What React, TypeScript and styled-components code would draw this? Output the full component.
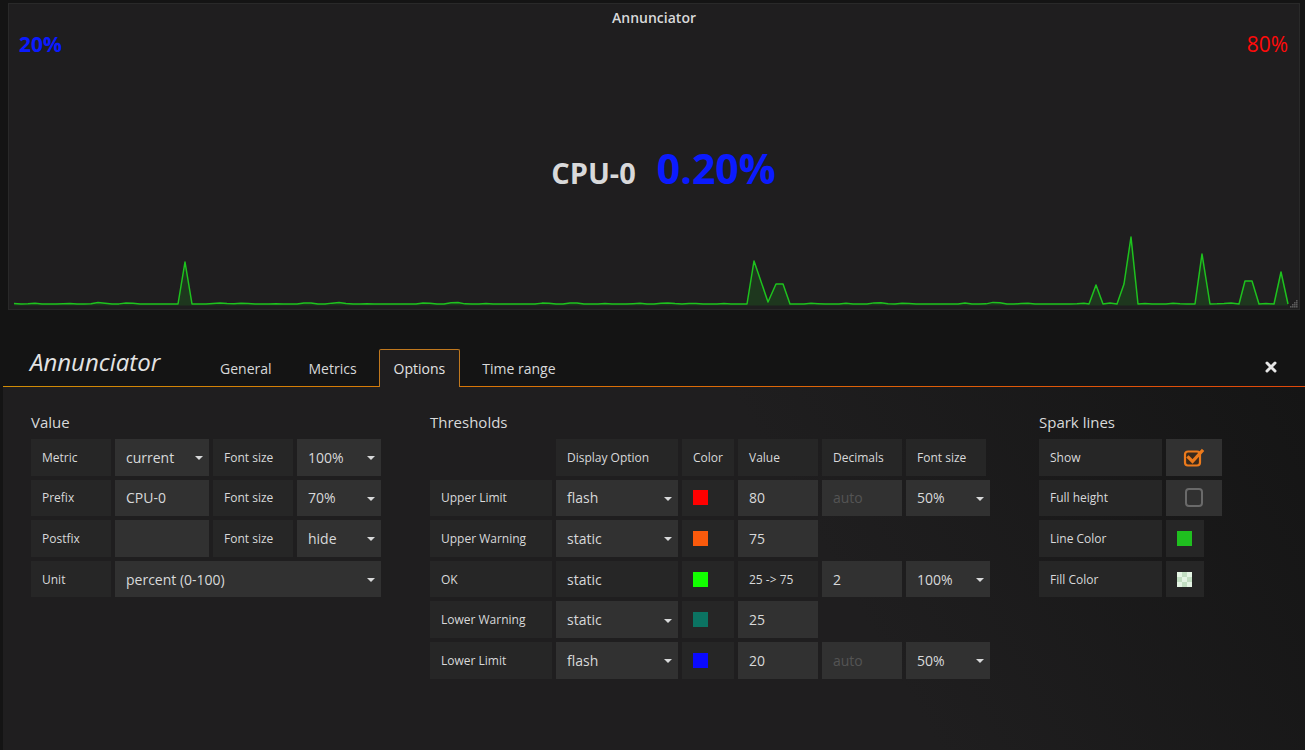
import React from 'react';
import styled, { createGlobalStyle } from 'styled-components';

const GlobalStyle = createGlobalStyle`
  html, body { margin: 0; padding: 0; background: #141414; }
  body { font-family: "Open Sans", "Liberation Sans", sans-serif; color: #d8d9da; }
  * { box-sizing: border-box; }
`;

const Page = styled.div`
  width: 1305px;
  height: 750px;
  overflow: hidden;
  display: flex;
  flex-direction: column;
  padding-top: 3px;
`;

/* ---------- Singlestat panel ---------- */
const Panel = styled.div`
  position: relative;
  margin: 0 5px 0 8px;
  height: 307px;
  flex: 0 0 auto;
  background: #1f1e1f;
  border: 1px solid #292929;
  display: flex;
  flex-direction: column;
`;

const PanelTitle = styled.div`
  height: 28px;
  line-height: 28px;
  text-align: center;
  font-size: 14px;
  font-weight: 600;
  color: #d8d9da;
`;

const LimitsRow = styled.div`
  height: 24px;
  line-height: 24px;
  display: flex;
  justify-content: space-between;
  padding: 0 11px 0 10px;
  font-size: 21px;
`;

const Limit = styled.span<{ $color: string; $bold?: boolean }>`
  color: ${(p) => p.$color};
  font-weight: ${(p) => (p.$bold ? 700 : 400)};
`;

const BigValueRow = styled.div`
  margin-top: 87px;
  height: 50px;
  display: flex;
  justify-content: center;
  align-items: baseline;
  padding-left: 19px;
  gap: 21px;
  font-weight: 700;
`;

const Prefix = styled.span`
  font-size: 29px;
  line-height: 50px;
  color: #d8d9da;
`;

const BigValue = styled.span`
  font-size: 41px;
  line-height: 50px;
  color: #0b1bff;
`;

const Spark = styled.svg`
  display: block;
  margin-top: auto;
  width: 1290px;
  height: 81px;
`;

const ResizeHandle = styled.svg`
  position: absolute;
  right: 1px;
  bottom: 1px;
  width: 10px;
  height: 10px;
`;

/* ---------- Editor ---------- */
const Editor = styled.div`
  margin-left: 3px;
  flex: 1 1 auto;
  display: flex;
  flex-direction: column;
`;

const EditorHeader = styled.div`
  height: 77px;
  display: flex;
  align-items: flex-end;
  padding-left: 27px;
  background:
    linear-gradient(90deg, #d08c06 0%, #dc6a08 55%, #e0480a 100%) left bottom / 100% 1px no-repeat,
    #141414;
`;

const EditorTitle = styled.div`
  flex: 0 0 175px;
  font-size: 24px;
  font-style: italic;
  line-height: 32px;
  margin-bottom: 9px;
  color: #e3e3e3;
`;

const Tabs = styled.div`
  display: flex;
  align-items: flex-end;
`;

const Tab = styled.div<{ $active?: boolean }>`
  height: 38px;
  line-height: 37px;
  padding: 0 14px;
  margin-right: 7px;
  font-size: 14px;
  color: ${(p) => (p.$active ? '#e3e3e3' : '#d8d9da')};
  border: 1px solid ${(p) => (p.$active ? '#c0781e' : 'transparent')};
  border-bottom: none;
  border-radius: 2px 2px 0 0;
  background: ${(p) => (p.$active ? '#1f1e1f' : 'transparent')};
`;

const CloseButton = styled.svg`
  margin-left: auto;
  margin-right: 28px;
  margin-bottom: 14px;
  width: 12px;
  height: 12px;
`;

const EditorBody = styled.div`
  flex: 1 1 auto;
  display: flex;
  gap: 49px;
  padding: 25px 0 0 28px;
  background: linear-gradient(60deg, #1f1e1f 62%, #151515 100%);
`;

const Section = styled.div`
  display: flex;
  flex-direction: column;
`;

const SectionHeading = styled.div`
  font-size: 15px;
  line-height: 20px;
  margin-bottom: 7px;
  color: #d8d9da;
`;

const Rows = styled.div`
  display: flex;
  flex-direction: column;
  gap: 4px;
`;

const Row = styled.div`
  display: flex;
  gap: 4px;
  height: 36.6px;
`;

const Label = styled.div<{ $w: number; $big?: boolean }>`
  width: ${(p) => p.$w}px;
  flex: 0 0 auto;
  display: flex;
  align-items: center;
  padding-left: 11px;
  background: #262626;
  font-size: ${(p) => (p.$big ? 14 : 12)}px;
  color: #d8d9da;
  white-space: nowrap;
`;

const Blank = styled.div<{ $w: number }>`
  width: ${(p) => p.$w}px;
  flex: 0 0 auto;
`;

const Field = styled.div<{ $w: number; $placeholder?: boolean }>`
  width: ${(p) => p.$w}px;
  flex: 0 0 auto;
  display: flex;
  align-items: center;
  justify-content: space-between;
  padding: 0 6px 0 11px;
  background: #313131;
  font-size: 14px;
  color: ${(p) => (p.$placeholder ? '#545454' : '#d8d9da')};
  white-space: nowrap;
`;

const Caret = styled.span`
  width: 0;
  height: 0;
  border-left: 4px solid transparent;
  border-right: 4px solid transparent;
  border-top: 4px solid #d8d9da;
  margin-top: 2px;
`;

const ColorCell = styled.div<{ $w: number }>`
  width: ${(p) => p.$w}px;
  flex: 0 0 auto;
  display: flex;
  align-items: center;
  padding-left: 11px;
  background: #262626;
`;

const Swatch = styled.span<{ $c: string }>`
  width: 15px;
  height: 15px;
  background: ${(p) => p.$c};
`;

const CheckerSwatch = styled.span`
  width: 15px;
  height: 15px;
  background: conic-gradient(#c2dec2 25%, #e4f4e4 0 50%, #c2dec2 0 75%, #e4f4e4 0) 0 0 / 10px 10px;
`;

const CheckCell = styled.div<{ $w: number }>`
  width: ${(p) => p.$w}px;
  flex: 0 0 auto;
  display: flex;
  align-items: center;
  justify-content: center;
  background: #313131;
`;

/* ---------- Sparkline data ---------- */
const SPIKES: [number, number][][] = [
  [[178, 304], [185, 262], [192, 304]],
  [[747, 304], [754, 261], [768, 302], [776, 284], [783, 284], [790, 304]],
  [[1089, 304], [1096, 285], [1103, 304]],
  [[1117, 304], [1124, 284], [1131, 237], [1138, 304]],
  [[1195, 304], [1202, 254], [1210, 304]],
  [[1239, 304], [1245, 281], [1252, 281], [1259, 304]],
  [[1274, 304], [1281, 272], [1288, 304]],
];

const noise = (x: number) =>
  0.8 * Math.sin(x * 0.21) + 0.6 * Math.sin(x * 0.057 + 1.3) + 0.4 * Math.sin(x * 0.73);

function buildSpark(): string {
  const pts: [number, number][] = [];
  let cursor = 14;
  for (const spike of SPIKES) {
    const start = spike[0][0];
    for (let x = cursor; x < start - 3; x += 7) {
      pts.push([x, 304 - Math.max(0, noise(x)) * 1.0]);
    }
    pts.push(...spike);
    cursor = spike[spike.length - 1][0] + 7;
  }
  return pts.map((p, i) => `${i === 0 ? 'M' : 'L'}${p[0]} ${p[1].toFixed(2)}`).join(' ');
}

const SPARK_LINE = buildSpark();
const SPARK_FILL = `${SPARK_LINE} L1288 305.5 L14 305.5 Z`;

/* ---------- Small drawings ---------- */
const CheckedBox = () => (
  <svg width="22" height="20" viewBox="0 0 22 20">
    <rect x="2" y="4.5" width="15" height="14" rx="3" fill="#3a2a1c" stroke="#ec7a1c" strokeWidth="2.2" />
    <path d="M5.5 10.5 L9.5 14.5 L19 4" fill="none" stroke="#ec7a1c" strokeWidth="3.2" strokeLinecap="square" />
  </svg>
);

const UncheckedBox = () => (
  <svg width="18" height="19" viewBox="0 0 18 19">
    <rect x="1" y="1" width="16" height="17" rx="3" fill="none" stroke="#6a6a6a" strokeWidth="2" />
  </svg>
);

type Thr = {
  name: string;
  display: string;
  selectable: boolean;
  color: string;
  value: string;
  rangeStyle?: boolean;
  decimals?: string;
  font?: string;
};

const THRESHOLDS: Thr[] = [
  { name: 'Upper Limit', display: 'flash', selectable: true, color: '#ff0000', value: '80', decimals: 'auto', font: '50%' },
  { name: 'Upper Warning', display: 'static', selectable: true, color: '#fa5a0c', value: '75' },
  { name: 'OK', display: 'static', selectable: false, color: '#12ff00', value: '25 -> 75', rangeStyle: true, decimals: '2', font: '100%' },
  { name: 'Lower Warning', display: 'static', selectable: true, color: '#0b7362', value: '25' },
  { name: 'Lower Limit', display: 'flash', selectable: true, color: '#0a0aff', value: '20', decimals: 'auto', font: '50%' },
];

export default function App() {
  return (
    <>
      <GlobalStyle />
      <Page>
        <Panel>
          <PanelTitle>Annunciator</PanelTitle>
          <LimitsRow>
            <Limit $color="#0b1bff" $bold>20%</Limit>
            <Limit $color="#ff0a0a">80%</Limit>
          </LimitsRow>
          <BigValueRow>
            <Prefix>CPU-0</Prefix>
            <BigValue>0.20%</BigValue>
          </BigValueRow>
          <Spark viewBox="9 228 1290 81" preserveAspectRatio="none">
            <path d={SPARK_FILL} fill="rgba(30,200,30,0.15)" />
            <path d={SPARK_LINE} fill="none" stroke="#1ec21e" strokeWidth="1.5" strokeLinejoin="round" />
          </Spark>
          <ResizeHandle viewBox="0 0 10 10">
            {[
              [8, 0], [6, 2], [8, 2], [4, 4], [6, 4], [8, 4], [2, 6], [4, 6], [6, 6], [8, 6],
            ].map(([x, y]) => (
              <rect key={`${x}-${y}`} x={x} y={y + 2} width="1.6" height="1.6" fill="#5a5a5a" />
            ))}
          </ResizeHandle>
        </Panel>

        <Editor>
          <EditorHeader>
            <EditorTitle>Annunciator</EditorTitle>
            <Tabs>
              <Tab>General</Tab>
              <Tab>Metrics</Tab>
              <Tab $active>Options</Tab>
              <Tab>Time range</Tab>
            </Tabs>
            <CloseButton viewBox="0 0 12 12">
              <path d="M2 2 L10 10 M10 2 L2 10" stroke="#e6e6e6" strokeWidth="3" strokeLinecap="round" />
            </CloseButton>
          </EditorHeader>

          <EditorBody>
            <Section>
              <SectionHeading>Value</SectionHeading>
              <Rows>
                <Row>
                  <Label $w={80}>Metric</Label>
                  <Field $w={94}>current<Caret /></Field>
                  <Label $w={80}>Font size</Label>
                  <Field $w={84}>100%<Caret /></Field>
                </Row>
                <Row>
                  <Label $w={80}>Prefix</Label>
                  <Field $w={94}>CPU-0</Field>
                  <Label $w={80}>Font size</Label>
                  <Field $w={84}>70%<Caret /></Field>
                </Row>
                <Row>
                  <Label $w={80}>Postfix</Label>
                  <Field $w={94} />
                  <Label $w={80}>Font size</Label>
                  <Field $w={84}>hide<Caret /></Field>
                </Row>
                <Row>
                  <Label $w={80}>Unit</Label>
                  <Field $w={266}>percent (0-100)<Caret /></Field>
                </Row>
              </Rows>
            </Section>

            <Section>
              <SectionHeading>Thresholds</SectionHeading>
              <Rows>
                <Row>
                  <Blank $w={122} />
                  <Label $w={122}>Display Option</Label>
                  <Label $w={52}>Color</Label>
                  <Label $w={80}>Value</Label>
                  <Label $w={80}>Decimals</Label>
                  <Label $w={80}>Font size</Label>
                </Row>
                {THRESHOLDS.map((t) => (
                  <Row key={t.name}>
                    <Label $w={122}>{t.name}</Label>
                    {t.selectable ? (
                      <Field $w={122}>{t.display}<Caret /></Field>
                    ) : (
                      <Label $w={122} $big>{t.display}</Label>
                    )}
                    <ColorCell $w={52}><Swatch $c={t.color} /></ColorCell>
                    {t.rangeStyle ? (
                      <Label $w={80}>{t.value}</Label>
                    ) : (
                      <Field $w={80}>{t.value}</Field>
                    )}
                    {t.decimals !== undefined && (
                      <Field $w={80} $placeholder={t.decimals === 'auto'}>{t.decimals}</Field>
                    )}
                    {t.font !== undefined && (
                      <Field $w={84}>{t.font}<Caret /></Field>
                    )}
                  </Row>
                ))}
              </Rows>
            </Section>

            <Section>
              <SectionHeading>Spark lines</SectionHeading>
              <Rows>
                <Row>
                  <Label $w={123}>Show</Label>
                  <CheckCell $w={56}><CheckedBox /></CheckCell>
                </Row>
                <Row>
                  <Label $w={123}>Full height</Label>
                  <CheckCell $w={56}><UncheckedBox /></CheckCell>
                </Row>
                <Row>
                  <Label $w={123}>Line Color</Label>
                  <ColorCell $w={38}><Swatch $c="#1fbf1f" /></ColorCell>
                </Row>
                <Row>
                  <Label $w={123}>Fill Color</Label>
                  <ColorCell $w={38}><CheckerSwatch /></ColorCell>
                </Row>
              </Rows>
            </Section>
          </EditorBody>
        </Editor>
      </Page>
    </>
  );
}
